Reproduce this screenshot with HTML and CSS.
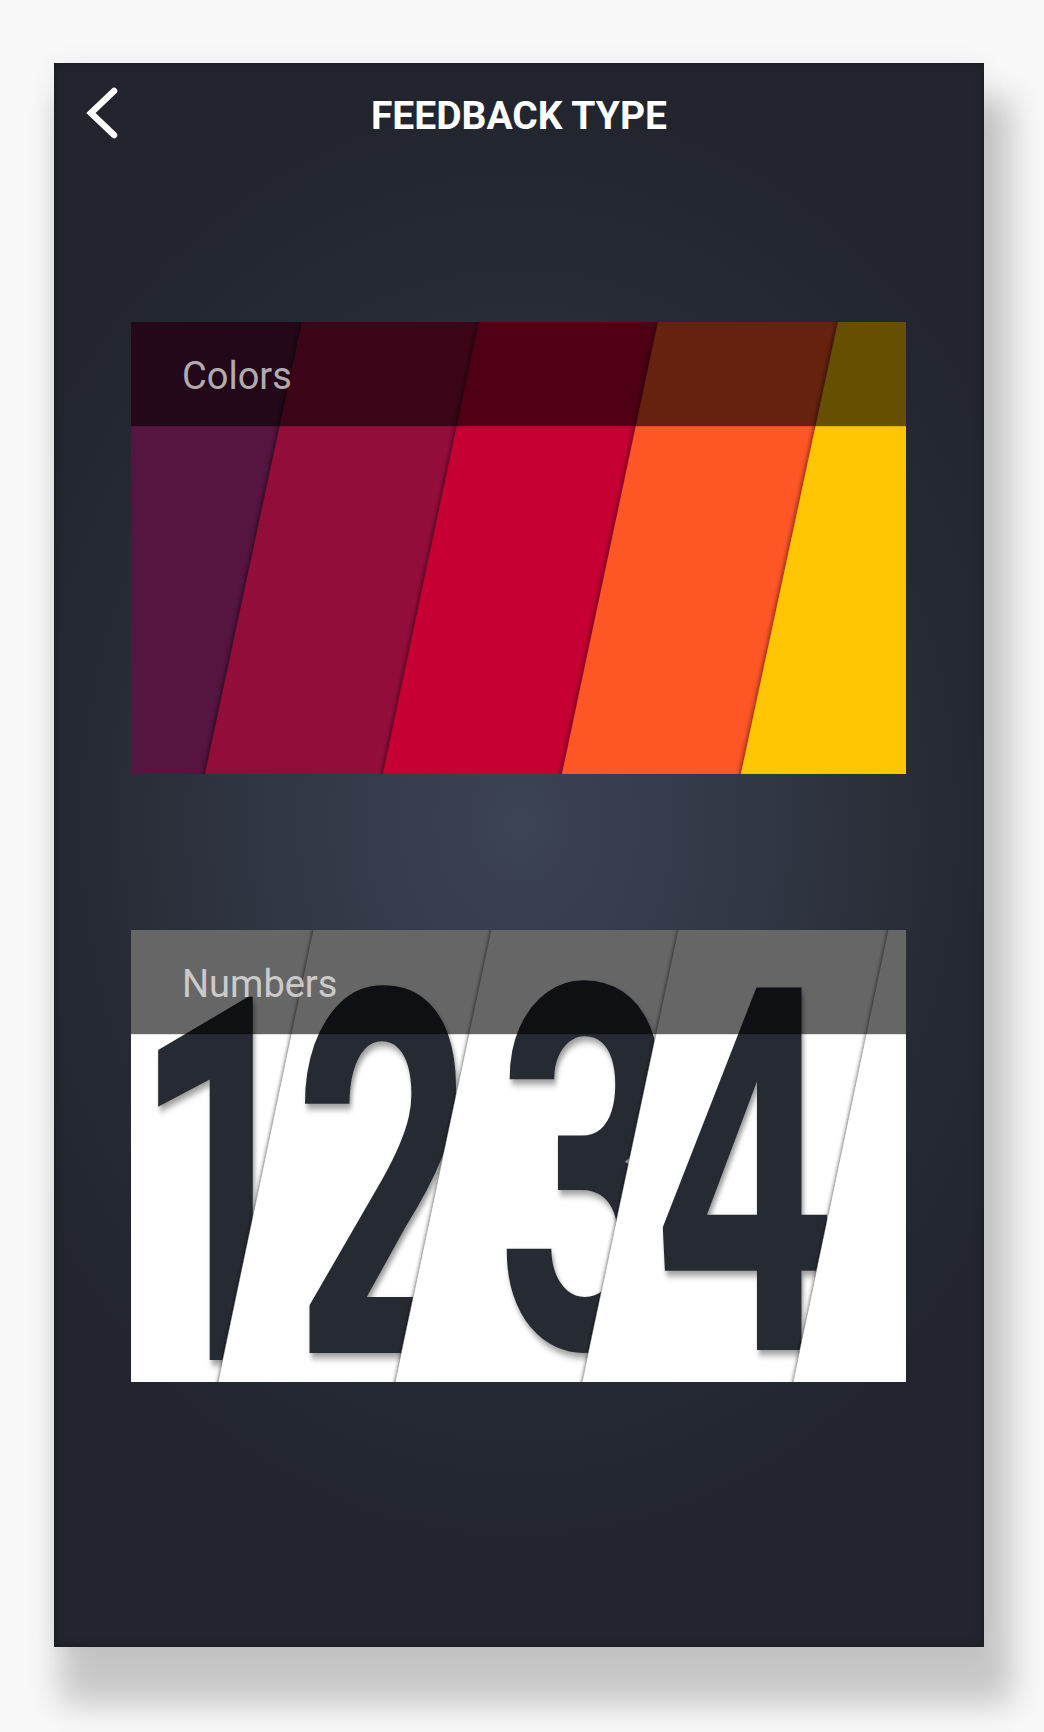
FILE: index.html
```html
<!DOCTYPE html>
<html lang="en">
<head>
<meta charset="utf-8">
<title>Feedback Type</title>
<link rel="stylesheet" href="styles.css">
</head>
<body>
<div class="phone">
  <header class="topbar">
    <button class="back" aria-label="Back">
      <svg class="back-icon" viewBox="0 0 44 60" width="44" height="60">
        <polyline points="34,6 11,28 34,50" fill="none" stroke="#ffffff" stroke-width="6.5" stroke-linecap="round" stroke-linejoin="miter"/>
      </svg>
    </button>
    <h1 class="title">FEEDBACK TYPE</h1>
    <span class="spacer"></span>
  </header>

  <main class="options">
    <section class="card">
      <svg class="art" viewBox="0 0 775 452" preserveAspectRatio="none">
        <defs>
          <filter id="stripeShadow" x="-30%" y="-10%" width="160%" height="120%">
            <feDropShadow dx="-2" dy="1" stdDeviation="2" flood-color="#000" flood-opacity="0.45"/>
          </filter>
        </defs>
        <rect width="775" height="452" fill="#561440"/>
        <polygon points="175.3,-20 800,-20 800,472 69.7,472" fill="#930a3a" filter="url(#stripeShadow)"/>
        <polygon points="352.2,-20 800,-20 800,472 247.8,472" fill="#c60032" filter="url(#stripeShadow)"/>
        <polygon points="531.2,-20 800,-20 800,472 426.8,472" fill="#ff5727" filter="url(#stripeShadow)"/>
        <polygon points="711.3,-20 800,-20 800,472 605.7,472" fill="#ffc600" filter="url(#stripeShadow)"/>
      </svg>
      <div class="band"><span class="label">Colors</span></div>
    </section>

    <section class="card">
      <svg class="art" viewBox="0 0 775 452" preserveAspectRatio="none">
        <defs>
          <filter id="panelShadow" x="-30%" y="-10%" width="160%" height="120%">
            <feDropShadow dx="-1.5" dy="0" stdDeviation="1.5" flood-color="#000" flood-opacity="0.3"/>
          </filter>
          <filter id="digitShadow" x="-30%" y="-20%" width="160%" height="150%">
            <feDropShadow dx="3" dy="5" stdDeviation="3.5" flood-color="#000" flood-opacity="0.4"/>
          </filter>
          <clipPath id="panel2"><polygon points="186.2,-20 800,-20 800,472 82.8,472"/></clipPath>
          <clipPath id="panel3"><polygon points="364.2,-20 800,-20 800,472 259.8,472"/></clipPath>
          <clipPath id="panel4"><polygon points="551.2,-20 800,-20 800,472 446.8,472"/></clipPath>
        </defs>
        <rect width="775" height="452" fill="#ffffff"/>
        <text class="digit" transform="translate(2 430) scale(0.6 1)" filter="url(#digitShadow)">1</text>

        <polygon points="186.2,-20 800,-20 800,472 82.8,472" fill="#ffffff" filter="url(#panelShadow)"/>
        <line x1="186.2" y1="-20" x2="82.8" y2="472" class="seam"/>
        <g clip-path="url(#panel2)">
          <text class="digit" transform="translate(163 423) scale(0.62 1)" filter="url(#digitShadow)">2</text>
        </g>

        <polygon points="364.2,-20 800,-20 800,472 259.8,472" fill="#ffffff" filter="url(#panelShadow)"/>
        <line x1="364.2" y1="-20" x2="259.8" y2="472" class="seam"/>
        <g clip-path="url(#panel3)">
          <text class="digit" transform="translate(366 418) scale(0.62 1)" filter="url(#digitShadow)">3</text>
        </g>

        <polygon points="551.2,-20 800,-20 800,472 446.8,472" fill="#ffffff" filter="url(#panelShadow)"/>
        <line x1="551.2" y1="-20" x2="446.8" y2="472" class="seam"/>
        <g clip-path="url(#panel4)">
          <text class="digit" transform="translate(523 420) scale(0.62 1)" filter="url(#digitShadow)">4</text>
        </g>

        <polygon points="761.2,-20 800,-20 800,472 657.8,472" fill="#ffffff" filter="url(#panelShadow)"/>
        <line x1="761.2" y1="-20" x2="657.8" y2="472" class="seam"/>
      </svg>
      <div class="band"><span class="label">Numbers</span></div>
    </section>
  </main>
</div>
</body>
</html>
```
FILE: styles.css
```css
html, body {
  margin: 0;
  padding: 0;
}

html {
  background: #f8f8f8;
}

body {
  background: #f8f8f8;
  font-family: Roboto, "Liberation Sans", Arial, sans-serif;
  padding-top: 63px;
  min-height: 1732px;
  box-sizing: border-box;
}

.phone {
  margin-left: 54px;
  width: 930px;
  height: 1584px;
  background:
    radial-gradient(ellipse 62% 46% at 50% 48%, #3c4354 0%, #303643 45%, #262a34 75%, #22252e 100%);
  box-shadow:
    inset 0 0 8px rgba(0, 0, 0, 0.35),
    17px 46px 30px 11px rgba(0, 0, 0, 0.2),
    0 0 24px rgba(0, 0, 0, 0.05);
}

.topbar {
  display: grid;
  grid-template-columns: 1fr auto 1fr;
  align-items: center;
  padding-top: 22px;
}

.back {
  justify-self: start;
  margin-left: 26px;
  width: 44px;
  height: 60px;
  padding: 0;
  border: 0;
  background: none;
  display: block;
}

.back-icon {
  display: block;
}

.title {
  margin: 2px 0 0;
  font-family: Roboto, "Liberation Sans", sans-serif;
  font-weight: 700;
  font-size: 39px;
  line-height: 39px;
  color: #ffffff;
  letter-spacing: 0;
}

.options {
  display: flex;
  flex-direction: column;
  gap: 156px;
  padding: 177px 0 0 77px;
}

.card {
  position: relative;
  width: 775px;
  height: 452px;
  overflow: hidden;
}

.art {
  position: absolute;
  left: 0;
  top: 0;
  width: 100%;
  height: 100%;
  display: block;
}

.band {
  position: relative;
  height: 104px;
  box-sizing: border-box;
  padding: 4px 0 0 51px;
  display: flex;
  align-items: center;
  background: rgba(0, 0, 0, 0.6);
  box-shadow: 0 1px 0 rgba(0, 0, 0, 0.12);
}

.label {
  font-family: Roboto, "Liberation Sans", sans-serif;
  font-weight: 400;
  font-size: 38px;
  line-height: 1;
  color: rgba(255, 255, 255, 0.68);
}

.digit {
  font-family: Roboto, "Liberation Sans", sans-serif;
  font-weight: 700;
  font-size: 510px;
  fill: #272a33;
}

.seam {
  stroke: rgba(0, 0, 0, 0.28);
  stroke-width: 1;
}
```
